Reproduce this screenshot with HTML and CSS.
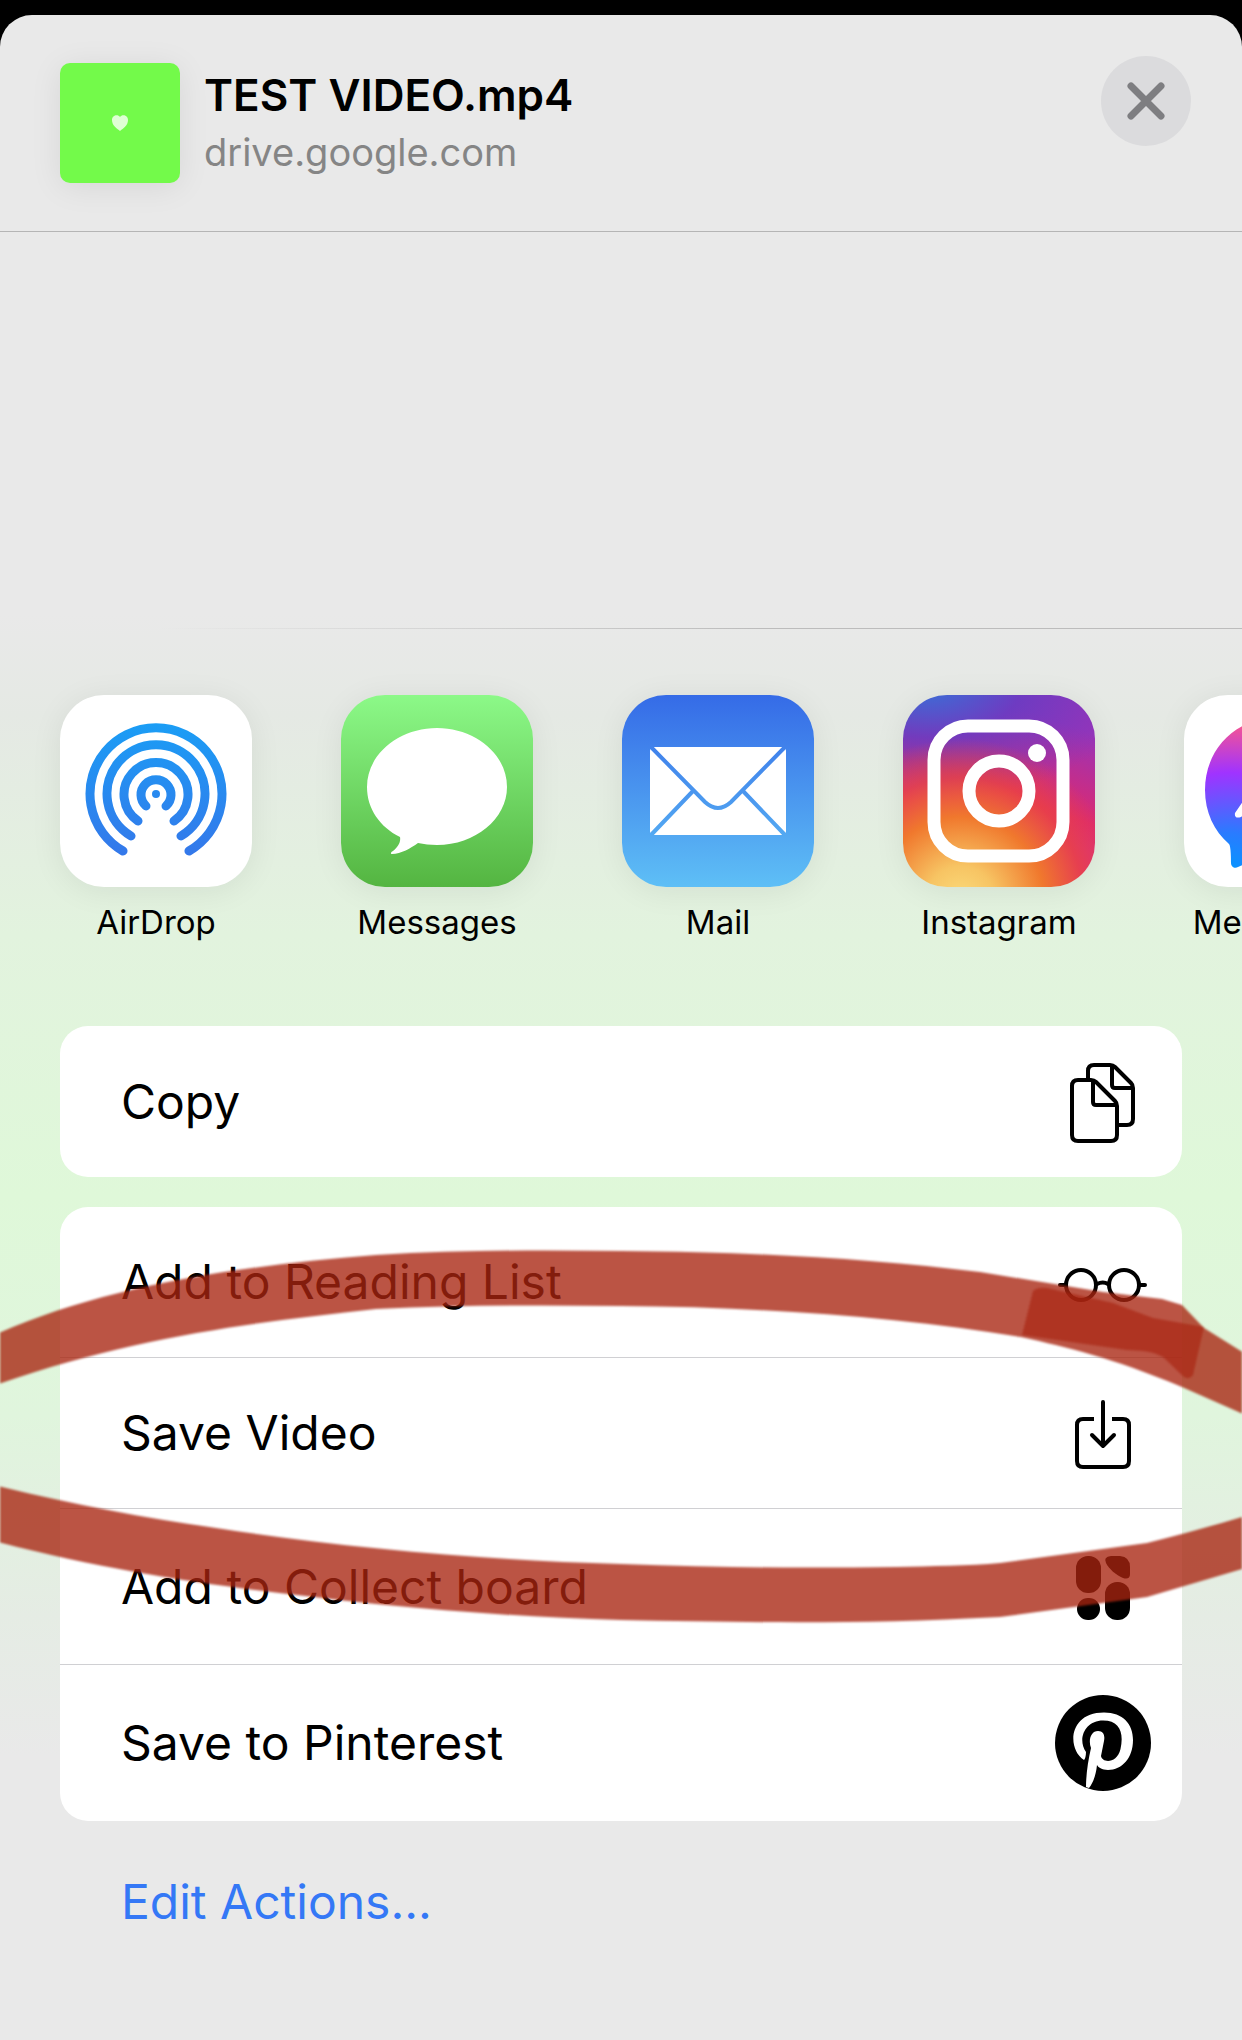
FILE: index.html
```
<!DOCTYPE html>
<html lang="en">
<head>
    <meta charset="UTF-8">
    <meta name="viewport" content="width=device-width, initial-scale=1.0">
    <title>Share</title>
    <link rel="stylesheet" href="styles.css">
</head>
<body>
    <main class="sheet">
        <header class="header">
            <div class="thumb">
                <svg width="18" height="18" viewBox="0 0 18 18" fill="#dfffd4">
                    <path d="M9 17C5 14 1 11 1 6C1 1 7 0 9 3C11 0 17 1 17 6C17 11 13 14 9 17Z"/>
                </svg>
            </div>
            <div class="file-info">
                <h1>TEST VIDEO.mp4</h1>
                <p>drive.google.com</p>
            </div>
            <button class="close" aria-label="Close">
                <svg width="90" height="90" viewBox="0 0 90 90" fill="none" stroke="#7e7e81" stroke-width="7" stroke-linecap="round">
                    <path d="M30 30L60 60M60 30L30 60"/>
                </svg>
            </button>
        </header>

        <div class="people"></div>

        <nav class="apps">
            <a class="app" href="#">
                <svg class="app-icon airdrop" viewBox="0 0 192 192" fill="none" stroke="url(#airdropBlue)" stroke-width="9" stroke-linecap="round">
                    <defs>
                        <linearGradient id="airdropBlue" gradientUnits="userSpaceOnUse" x1="0" y1="29" x2="0" y2="160">
                            <stop offset="0" stop-color="#1b9df5"/>
                            <stop offset="1" stop-color="#3478ea"/>
                        </linearGradient>
                    </defs>
                    <circle cx="96" cy="99" r="4" fill="url(#airdropBlue)" stroke="none"/>
                    <path d="M86 111A15 15 0 1 1 106 111"/>
                    <path d="M78 126A32 32 0 1 1 114 126"/>
                    <path d="M71 141A49 49 0 1 1 121 141"/>
                    <path d="M63 156A66 66 0 1 1 129 156"/>
                </svg>
                <span>AirDrop</span>
            </a>
            <a class="app" href="#">
                <svg class="app-icon messages" viewBox="0 0 192 192" fill="#fff">
                    <path d="M96 33C134 33 166 59 166 92C166 124 134 150 96 150C89 150 83 149 77 148C70 153 60 159 51 159C49 159 50 157 52 156C57 152 60 147 59 142C39 132 26 114 26 92C26 59 58 33 96 33Z"/>
                </svg>
                <span>Messages</span>
            </a>
            <a class="app" href="#">
                <svg class="app-icon mail" viewBox="0 0 192 192">
                    <defs>
                        <linearGradient id="mailBlue" gradientUnits="userSpaceOnUse" x1="0" y1="0" x2="0" y2="192">
                            <stop offset="0" stop-color="#356be7"/>
                            <stop offset="1" stop-color="#5ebff6"/>
                        </linearGradient>
                    </defs>
                    <rect x="28" y="52" width="136" height="88" rx="4" fill="#fff"/>
                    <g fill="none" stroke="url(#mailBlue)" stroke-width="4">
                        <path d="M29 52L83 107Q96 119 109 107L163 52"/>
                        <path d="M29 140L71 96M163 140L121 96"/>
                    </g>
                </svg>
                <span>Mail</span>
            </a>
            <a class="app" href="#">
                <svg class="app-icon instagram" viewBox="0 0 192 192" fill="none" stroke="#fff" stroke-width="13">
                    <rect x="31" y="31" width="129" height="130" rx="34"/>
                    <circle cx="96" cy="96" r="30"/>
                    <circle cx="134" cy="58" r="9" fill="#fff" stroke="none"/>
                </svg>
                <span>Instagram</span>
            </a>
            <a class="app" href="#">
                <svg class="app-icon messenger" viewBox="0 0 192 192">
                    <defs>
                        <radialGradient id="messengerFill" gradientUnits="userSpaceOnUse" cx="46" cy="175" r="150">
                            <stop offset="0" stop-color="#0695ff"/>
                            <stop offset="0.25" stop-color="#2a7bff"/>
                            <stop offset="0.65" stop-color="#a033ff"/>
                            <stop offset="0.95" stop-color="#f0529a"/>
                            <stop offset="1" stop-color="#ff6968"/>
                        </radialGradient>
                    </defs>
                    <path d="M96 22C53 22 21 53 21 95C21 117 30 136 45 149C47 151 47 165 47 168C47 172 51 174 54 172L70 165C78 168 87 169 96 169C139 169 171 137 171 95C171 53 139 22 96 22Z" fill="url(#messengerFill)"/>
                    <path d="M51 118L74 84Q81 73 92 81L108 93L139 76L118 109Q110 120 100 112L84 101L57 122Q50 124 51 118Z" fill="#fff"/>
                </svg>
                <span>Messenger</span>
            </a>
        </nav>

        <section class="actions">
            <div class="card">
                <button class="row">
                    <span>Copy</span>
                    <svg width="96" height="96" viewBox="0 0 96 96" fill="none" stroke="#000" stroke-width="4" stroke-linejoin="round">
                        <path d="M33 26V17Q33 11 39 11H55Q58 11 60 13L76 29Q78 31 78 34V65Q78 71 72 71H64"/>
                        <path d="M57 11V31Q57 34 60 34H78"/>
                        <path d="M23 26H36Q39 26 41 28L60 47Q62 49 62 52V81Q62 87 56 87H23Q17 87 17 81V32Q17 26 23 26Z"/>
                        <path d="M38 26V48Q38 51 41 51H62"/>
                    </svg>
                </button>
            </div>
        </section>

        <section class="actions">
            <div class="card">
                <button class="row">
                    <span>Add to Reading List</span>
                    <svg width="96" height="96" viewBox="0 0 96 96" fill="none" stroke="#000" stroke-width="4" stroke-linecap="round">
                        <circle cx="26" cy="51" r="15"/>
                        <circle cx="69" cy="51" r="15"/>
                        <path d="M42 50Q48 47 53 50M5 51H10M85 51H90"/>
                    </svg>
                </button>
                <button class="row">
                    <span>Save Video</span>
                    <svg width="96" height="96" viewBox="0 0 96 96" fill="none" stroke="#000" stroke-width="4">
                        <path d="M39 34H28Q22 34 22 40V76Q22 82 28 82H68Q74 82 74 76V40Q74 34 68 34H57"/>
                        <path d="M48 17V61M37 50L48 61L59 50" stroke-linecap="round" stroke-linejoin="round"/>
                    </svg>
                </button>
                <button class="row tall">
                    <span>Add to Collect board</span>
                    <svg width="96" height="96" viewBox="0 0 96 96">
                        <rect x="21" y="17" width="25" height="37" rx="12"/>
                        <rect x="22" y="59" width="23" height="22" rx="11"/>
                        <rect x="50" y="43" width="25" height="38" rx="12"/>
                        <path d="M56 17H65Q75 18 75 28V35Q75 41 68 39C61 36 54 30 51 24Q48 18 56 17Z"/>
                    </svg>
                </button>
                <button class="row tall">
                    <span>Save to Pinterest</span>
                    <svg width="96" height="96" viewBox="0 0 96 96">
                        <circle cx="48" cy="48" r="48"/>
                        <path d="M29 65C12 54 13 17.5 49 17.5C68 17.5 78 29 78 45C78 63 67 75 53 75C47 75 43 72 42 70C41 80 38 88 34 93L31 92C31 80 33 66 36 53C33 45 36 36 43 36C49 36 50 41 49 46L46 61C47 68 62 69 65.5 54C69 38 65 25.5 48 25.5C30 25.5 22 44 31 57C31 61 30 64 29 65Z" fill="#fff"/>
                    </svg>
                </button>
            </div>

            <!-- hand-drawn marker ring around Save Video -->
            <svg class="marker" viewBox="0 0 1242 384" preserveAspectRatio="none" fill="#a82410">
                <g fill-opacity="0.78">
                    <path d="M-10 92C90 46 220 22 376 10C460 5 540 5 621 6C760 7 870 14 980 27L1103 47L1162 54L1182 60L1204 83L1252 113V173L1182 142C1110 112 1070 103 1021 92C900 72 760 62 621 61C540 60 460 60 376 64C250 78 130 92 -10 142Z"/>
                    <path d="M-10 239C70 259 140 272 216 283C340 302 480 315 621 319C720 323 810 323 897 322C930 321 970 321 1000 318L1147 298C1180 290 1215 280 1252 269V321L1147 352L1000 372C850 380 740 377 621 375C540 373 460 367 376 359C240 344 130 332 -10 295Z"/>
                </g>
                <path d="M1033 46Q1038 42 1047 43L1113 58L1153 73L1204 82L1193 130Q1190 135 1184 132L1163 112C1150 105 1140 106 1127 105L1022 90Z" fill-opacity="0.65"/>
            </svg>
        </section>

        <a class="edit" href="#">Edit Actions...</a>
    </main>
</body>
</html>
```
FILE: styles.css
```
* {
    box-sizing: border-box;
}
body {
    margin: 0;
    padding-top: 15px;
    background-color: #000;
    font-family: Inter, "Liberation Sans", sans-serif;
    color: #000;
    overflow-x: hidden;
}
.sheet {
    min-height: calc(100vh - 15px);
    border-radius: 32px 32px 0 0;
    background: linear-gradient(#e9e9e9 600px, #e5e9e4 700px, #e2f3de 920px, #dff8d9 1180px, #e0f5dd 1400px, #e5ece4 1600px, #e9e9e9 1740px);
    overflow: hidden;
}
.header {
    display: flex;
    align-items: flex-start;
    height: 217px;
    padding: 48px 51px 0 60px;
    border-bottom: 1px solid #b5b5b5;
}
.thumb {
    display: flex;
    justify-content: center;
    align-items: center;
    width: 120px;
    height: 120px;
    border-radius: 10px;
    background-color: #73fa4a;
    box-shadow: 0 4px 32px rgba(0, 0, 0, 0.08);
}
.file-info {
    flex: 1;
    padding-left: 24px;
}
.file-info h1 {
    margin: 4px 0 0;
    font-size: 44px;
    line-height: 56px;
    font-weight: 600;
}
.file-info p {
    margin: 0;
    font-size: 38px;
    line-height: 58px;
    color: #858585;
}
.close {
    width: 90px;
    height: 90px;
    margin-top: -7px;
    padding: 0;
    border: none;
    border-radius: 50%;
    background-color: #dbdbdd;
}
.close svg {
    display: block;
}
.people {
    height: 397px;
    border-bottom: 1px solid;
    border-image: linear-gradient(90deg, transparent 160px, #bcbcbc 760px) 1;
}
.apps {
    display: flex;
    gap: 89px;
    padding: 66px 60px 84px;
    overflow: hidden;
}
.app {
    flex: none;
    width: 192px;
    color: #000;
    font-size: 33px;
    line-height: 40px;
    text-align: center;
    text-decoration: none;
}
.app-icon {
    display: block;
    width: 192px;
    height: 192px;
    margin-bottom: 15px;
    border-radius: 44px;
    box-shadow: 0 4px 32px rgba(0, 0, 0, 0.07);
}
.airdrop, .messenger {
    background-color: #fff;
}
.messages {
    background: linear-gradient(#8cf988, #54b541);
}
.mail {
    background: linear-gradient(#356be7, #5ebff6);
}
.instagram {
    background:
        radial-gradient(circle at 30% 107%, #fbdc7c 0%, #f7c463 14%, #f0782d 34%, rgba(236, 70, 60, 0.7) 50%, rgba(221, 42, 123, 0) 66%),
        radial-gradient(ellipse 110% 60% at 12% -5%, #3771d8 0%, rgba(105, 60, 195, 0.9) 45%, rgba(150, 50, 170, 0) 100%),
        linear-gradient(20deg, #d92e7f 40%, #dd2a6f 50%, #9a33b8 85%);
}
.actions {
    position: relative;
    padding: 0 60px;
    margin-bottom: 30px;
}
.card {
    border-radius: 28px;
    background-color: #fff;
    overflow: hidden;
}
.row {
    display: flex;
    justify-content: space-between;
    align-items: center;
    width: 100%;
    height: 151px;
    padding: 0 31px 0 61px;
    border: none;
    border-bottom: 1px solid #d0d0d3;
    background: none;
    color: #000;
    font-family: inherit;
    font-size: 48px;
    line-height: 60px;
}
.row:last-child {
    border-bottom: none;
}
.tall {
    height: 156px;
}
.marker {
    position: absolute;
    top: 38px;
    left: 0;
    width: 100%;
    height: 384px;
    filter: blur(1px);
    pointer-events: none;
}
.edit {
    display: inline-block;
    margin-left: 121px;
    padding: 21px 0 79px;
    color: #3478f6;
    font-size: 48px;
    line-height: 60px;
    text-decoration: none;
}
```
